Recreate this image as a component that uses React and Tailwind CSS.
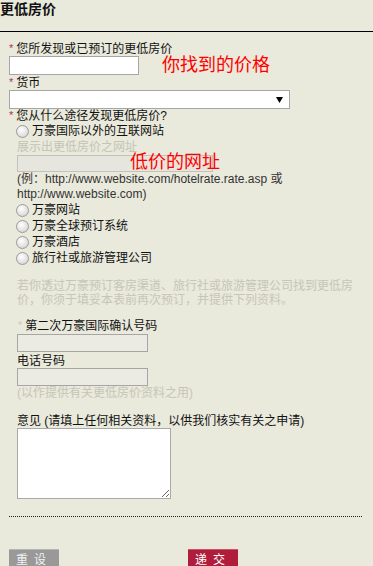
import React from "react";

const font = { fontFamily: '"Liberation Sans", "Noto Sans CJK SC", sans-serif' };

function Radio({ children }) {
  return (
    <div className="flex h-[16px] items-center pl-[7px]">
      <span className="box-border h-[13px] w-[13px] rounded-full border border-[#9b9b9b] bg-[radial-gradient(circle_at_40%_35%,#ffffff_0%,#e4e4e4_55%,#c8c8c8_100%)]" />
      <span className="ml-[3px] leading-[16px] text-[#111]">{children}</span>
    </div>
  );
}

function Star({ light }) {
  return (
    <span className={`mr-[3px] inline-block align-top text-[11px] leading-[12px] ${light ? "text-[#c9c9ba]" : "text-[#b0305a]"}`}>*</span>
  );
}

export default function App() {
  return (
    <div className="min-h-[566px] w-[373px] overflow-hidden bg-[#e9e9dc] text-[12px] text-[#111]" style={font}>
      <div className="h-[32px] border-b border-black pt-[1px] text-[14px] font-bold leading-[17px] text-[#111]">更低房价</div>
      <div className="pl-[9px]">
        <div className="mt-[10px] h-[14px] leading-[14px]"><Star />您所发现或已预订的更低房价</div>
        <div className="flex h-[19px] items-center">
          <div className="h-[19px] w-[130px] border border-[#a6a6a6] bg-white" />
          <span className="ml-[23px] text-[18px] leading-[19px] text-[#ff0000]">你找到的价格</span>
        </div>
        <div className="mt-[1px] h-[14px] leading-[14px]"><Star />货币</div>
        <div className="flex h-[19px] w-[281px] items-center justify-end border border-[#a6a6a6] bg-white pr-[6px]">
          <svg width="7" height="6" viewBox="0 0 7 6"><path d="M0 0 H7 L3.5 6 Z" fill="#000" /></svg>
        </div>
        <div className="h-[14px] leading-[14px]"><Star />您从什么途径发现更低房价?</div>
        <Radio>万豪国际以外的互联网站</Radio>
        <div className="pl-[8px]">
          <div className="mt-[1px] h-[14px] leading-[14px] text-[#c4c4b4]">展示出更低房价之网址</div>
          <div className="relative mt-[1px] h-[17px] w-[196px] border border-[#c2c2bc] bg-[#e6e6de]">
            <span className="absolute left-[112px] top-[-4px] whitespace-nowrap text-[18px] leading-[20px] text-[#ff0000]">低价的网址</span>
          </div>
          <div className="whitespace-nowrap leading-[15px] text-[#333]">
            (例：http://www.website.com/hotelrate.rate.asp 或<br />http://www.website.com)
          </div>
        </div>
        <Radio>万豪网站</Radio>
        <Radio>万豪全球预订系统</Radio>
        <Radio>万豪酒店</Radio>
        <Radio>旅行社或旅游管理公司</Radio>
        <div className="mt-[13px] whitespace-nowrap pl-[8px] leading-[14px] text-[#c6c6b6]">
          若你透过万豪预订客房渠道、旅行社或旅游管理公司找到更低房<br />价，你须于填妥本表前再次预订，并提供下列资料。
        </div>
        <div className="pl-[8px]">
          <div className="mt-[12px] h-[14px] pl-[1px] leading-[14px]"><Star light />第二次万豪国际确认号码</div>
          <div className="mt-[1px] h-[18px] w-[131px] border border-[#a6a6a6] bg-[#ebebe4]" />
          <div className="mt-[2px] h-[14px] leading-[14px]">电话号码</div>
          <div className="h-[18px] w-[131px] border border-[#a6a6a6] bg-[#ebebe4]" />
          <div className="h-[14px] leading-[14px] text-[#c6c6b6]">(以作提供有关更低房价资料之用)</div>
          <div className="mt-[14px] h-[14px] leading-[14px]">意见 (请填上任何相关资料，以供我们核实有关之申请)</div>
          <textarea className="block h-[71px] w-[154px] border border-[#a9a9a9] bg-white outline-none" />
        </div>
        <div className="mt-[17px] w-[353px] border-t border-dotted border-[#222]" />
        <div className="mt-[32px] flex">
          <div className="flex h-[20px] w-[50px] items-center justify-center border-t border-[#b5b5b5] bg-[#999] tracking-[6px] text-[#f2f2f2]">重设</div>
          <div className="ml-[129px] flex h-[20px] w-[50px] items-center justify-center border-t border-[#d0506a] bg-[#b01d3a] tracking-[6px] text-[#fff]">递交</div>
        </div>
      </div>
    </div>
  );
}
